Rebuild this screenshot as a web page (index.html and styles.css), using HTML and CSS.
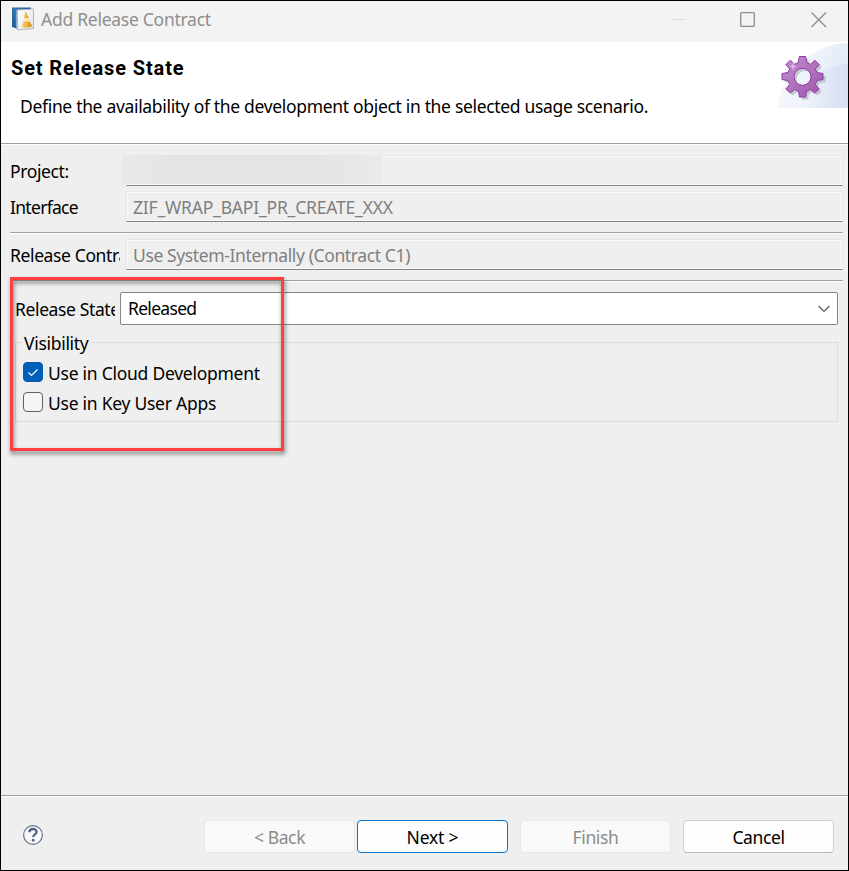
FILE: index.html
```html
<!DOCTYPE html>
<html lang="en">
<head>
<meta charset="utf-8">
<title>Add Release Contract</title>
<link rel="stylesheet" href="styles.css">
</head>
<body>
<div class="dialog">
  <header class="titlebar">
    <svg class="app-icon" width="24" height="26" viewBox="0 0 24 26">
      <defs>
        <linearGradient id="blue" x1="0" y1="0" x2="1" y2="1"><stop offset="0" stop-color="#3478b8"/><stop offset="1" stop-color="#123f78"/></linearGradient>
        <linearGradient id="gold" x1="0" y1="0" x2="1" y2="0"><stop offset="0" stop-color="#f7cf62"/><stop offset=".5" stop-color="#efb02c"/><stop offset="1" stop-color="#cf800c"/></linearGradient>
        <linearGradient id="page" x1="0" y1="0" x2="1" y2="1"><stop offset="0" stop-color="#fff"/><stop offset="1" stop-color="#dfe0e4"/></linearGradient>
      </defs>
      <path d="M1 2.500H20V5H6V23.500L1 22Z" fill="url(#blue)"/>
      <path d="M4.800 4.500H6V24L4.800 23.500Z" fill="#7fa6cb"/>
      <path d="M6.500 5L22.500 4V23.500L6.500 25Z" fill="url(#page)" stroke="#b4b7bd"/>
      <path d="M14.500 6L17.500 13H13Z" fill="url(#gold)"/>
      <path d="M13 13H17.500L18.500 16.500H12.500Z" fill="#fbe7b4"/>
      <path d="M12.500 16.500H18.500L21.300 21Q16 24 11 22Z" fill="url(#gold)"/>
    </svg>
    <span class="caption">Add Release Contract</span>
    <svg class="window-controls" width="170" height="41" viewBox="0 0 170 41" fill="none">
      <path d="M0 18.500H15" stroke="#dedede"/>
      <rect x="69.700" y="11.700" width="13.600" height="13.600" rx="1" stroke="#8b8b8b" stroke-width="1.300"/>
      <path d="M140.500 11.500L155 26M155 11.500L140.500 26" stroke="#8b8b8b" stroke-width="1.300"/>
    </svg>
  </header>

  <section class="banner">
    <div class="banner-text">
      <h1>Set Release State</h1>
      <p>Define the availability of the development object in the selected usage scenario.</p>
    </div>
    <svg class="banner-art" width="70" height="66" viewBox="778 42 70 66">
      <defs>
        <linearGradient id="sky" x1="0" y1="0" x2="1" y2=".3"><stop offset="0" stop-color="#fbfcfe"/><stop offset="1" stop-color="#e3eaf7"/></linearGradient>
        <linearGradient id="sky2" x1="0" y1="0" x2="1" y2="0"><stop offset="0" stop-color="#f3f6fc"/><stop offset="1" stop-color="#d5dff3"/></linearGradient>
        <linearGradient id="violet" x1="0" y1="0" x2="1" y2="1"><stop offset="0" stop-color="#c48fce"/><stop offset="1" stop-color="#9b55ab"/></linearGradient>
      </defs>
      <path d="M778 108C779 78 808 44 848 43V108Z" fill="url(#sky)"/>
      <path d="M796 108C798 84 820 66 848 64V108Z" fill="url(#sky2)"/>
      <path transform="translate(2.500 2.500)" fill="#8d8b99" opacity=".42" fill-rule="evenodd" d="M799.300 56.500H805.700L806.700 62.500L810.700 64.200L814.800 60.200L819.300 64.700L815.200 69L817 72.500L823 73.500V79.500L817 80.500L815.300 84.500L819.200 89L814.700 93L810.500 89.500L806.500 91.200L805.500 97H799.500L798.500 91.200L794.500 89.500L790.500 93L785.800 89L789.700 84.500L788 80.500L782 79.500V73.500L788 72.500L789.700 69L785.800 64.700L790.300 60.200L794.500 64.200L798.300 62.500ZM802.500 68.500A8.300 8.300 0 1 0 802.500 85.100A8.300 8.300 0 1 0 802.500 68.500Z"/>
      <path fill="url(#violet)" stroke="#8f3ba5" fill-rule="evenodd" d="M799.300 56.500H805.700L806.700 62.500L810.700 64.200L814.800 60.200L819.300 64.700L815.200 69L817 72.500L823 73.500V79.500L817 80.500L815.300 84.500L819.200 89L814.700 93L810.500 89.500L806.500 91.200L805.500 97H799.500L798.500 91.200L794.500 89.500L790.500 93L785.800 89L789.700 84.500L788 80.500L782 79.500V73.500L788 72.500L789.700 69L785.800 64.700L790.300 60.200L794.500 64.200L798.300 62.500ZM802.500 68.300A8.500 8.500 0 1 0 802.500 85.300A8.500 8.500 0 1 0 802.500 68.300Z"/>
      <path d="M793 62L794 65.500L797 66.500L794 67.500L793 71L792 67.500L789 66.500L792 65.500Z" fill="#dcb9e3"/>
    </svg>
  </section>

  <main class="form">
    <div class="row"><label>Project:</label><div class="field"><div class="redacted"></div></div></div>
    <div class="row"><label class="tight">Interface</label><div class="field"><span class="object-name">ZIF_WRAP_BAPI_PR_CREATE_XXX</span></div></div>
    <hr>
    <div class="row"><label>Release Contract:</label><div class="field"><span>Use System-Internally (Contract C1)</span></div></div>
    <hr>
    <div class="state-row">
      <label>Release State:</label>
      <div class="combo"><span class="tight">Released</span>
        <svg width="14" height="10" viewBox="0 0 14 10" fill="none"><path d="M1.500 2L7 7.500L12.500 2" stroke="#5c5c5c" stroke-width="1.200"/></svg>
      </div>
    </div>
    <fieldset class="group">
      <legend>Visibility</legend>
      <label class="check"><span class="box checked"><svg width="20" height="20" viewBox="0 0 20 20" fill="none"><path d="M5.500 10.500L8.500 13.500L14.500 7.500" stroke="#fff" stroke-width="1.100"/></svg></span><span>Use in Cloud Development</span></label>
      <label class="check"><span class="box"></span><span>Use in Key User Apps</span></label>
    </fieldset>
    <div class="highlight"></div>
  </main>

  <footer class="footer">
    <svg class="help" width="22" height="22" viewBox="0 0 22 22">
      <circle cx="11" cy="11" r="9.400" fill="#f8f9fb" stroke="#66758f" stroke-width="1.200"/>
      <path d="M7.400 8.300C7.400 3.900 14.600 4 14.600 8C14.600 10.400 11.200 10.400 11.200 13" fill="none" stroke="#506283" stroke-width="2.300"/>
      <circle cx="11.200" cy="16.200" r="1.400" fill="#506283"/>
    </svg>
    <button class="disabled back" disabled>&lt; Back</button>
    <button class="primary">Next &gt;</button>
    <button class="disabled finish" disabled>Finish</button>
    <button class="cancel">Cancel</button>
  </footer>
</div>
</body>
</html>
```
FILE: styles.css
```css
* { box-sizing: border-box; }
body { margin: 0; background: #efefef; }
.dialog {
  width: 849px; height: 871px;
  border: 1px solid #000;
  display: flex; flex-direction: column;
  background: #efefef; color: #000;
  font: 17.5px/24px "Noto Sans", "Open Sans", sans-serif;
  letter-spacing: -0.38px;
  white-space: nowrap;
}
.titlebar {
  height: 41px; flex: none;
  display: flex; align-items: flex-start;
  background: #f3f3f3; color: #8f8f8f;
}
.app-icon { margin: 4px 0 0 10px; }
.caption { margin: 6px 0 0 6px; letter-spacing: -0.27px; }
.window-controls { margin-left: auto; margin-right: 7px; }
.banner {
  height: 103px; flex: none;
  display: flex; justify-content: space-between;
  background: #fff;
  border-bottom: 1px solid #fff;
  box-shadow: inset 0 -1px #a0a0a0;
}
h1 {
  margin: 14px 0 0 10px;
  font: 700 20px/24px Roboto, sans-serif;
  letter-spacing: 0.87px;
}
.banner p { margin: 14px 0 0 19px; letter-spacing: -0.325px; }
.form {
  position: relative;
  flex: 1;
  padding: 10px 5px 0 9px;
}
.row { display: flex; height: 31px; margin-bottom: 5px; }
.row label { width: 110px; margin-right: 6px; padding-top: 4px; overflow: hidden; }
.field {
  flex: 1;
  padding: 3px 0 0 6px;
  border: 1px solid #e6e6e6;
  border-bottom-color: #848484;
  box-shadow: inset 1px 1px #fafafa, inset -1px -1px #fafafa;
  color: #808080;
}
.object-name { letter-spacing: -0.2px; }
.form .tight { letter-spacing: -0.7px; }
.redacted {
  width: 260px; height: 29px;
  margin: -4px 0 0 -11px;
  background: linear-gradient(90deg, #e9e9e9, #e4e4e4 20%, #e4e4e4 75%, #eaeaea);
}
hr {
  height: 2px; margin: 10px 0 5px;
  border: 0; border-top: 1px solid #a0a0a0;
  background: #fff;
}
.state-row { display: flex; height: 33px; margin: 10px 5px 0; }
.state-row label { width: 100px; margin-right: 5px; padding-top: 5px; overflow: hidden; }
.combo {
  flex: 1;
  display: flex; justify-content: space-between;
  padding: 3px 6px 0 7px;
  border: 1px solid #868686; border-radius: 2px;
  background: #fff;
}
.combo svg { margin-top: 8px; }
.group {
  height: 93px; margin: 4px 5px 0; padding: 7px 0 0 7px;
  border: 1px solid #dcdcdc;
}
.group legend { margin-left: -1px; padding: 2px 2px 0; letter-spacing: -0.3px; }
.check { display: flex; height: 30px; letter-spacing: -0.26px; }
.check span + span { margin-top: -1px; }
.box {
  width: 20px; height: 20px; margin: 0 5px 0 0;
  border: 1px solid #626262; border-radius: 4px;
  background: #f5f5f5;
}
.box.checked { background: #005fb8; border-color: #005fb8; }
.box svg { display: block; margin: -1px; }
.highlight {
  position: absolute; left: 9px; top: 132px;
  width: 274px; height: 174px;
  border: 3px solid #fd4141;
  filter: drop-shadow(1px 3px 2px rgba(0, 0, 0, .5));
}
.footer {
  height: 75px; flex: none;
  display: flex; align-items: flex-start;
  padding: 24px 14px 0 21px;
  border-top: 1px solid #a0a0a0;
  box-shadow: inset 0 1px #fff;
}
.help { margin-top: 4px; }
button {
  width: 151px; height: 33px; padding: 1px 0 0;
  font: inherit; letter-spacing: inherit; color: #000;
  border: 1px solid #d0d0d0; border-bottom-color: #b9b9b9; border-radius: 4px;
  background: #fdfdfd;
}
.disabled { color: #8c8c8c; background: #f9f9f9; border-color: #e7e7e7; }
.primary { border-color: #0078d4; margin-left: 2px; letter-spacing: -0.2px; }
.back { margin-left: auto; }
.finish { margin: 0 12px; }
```
